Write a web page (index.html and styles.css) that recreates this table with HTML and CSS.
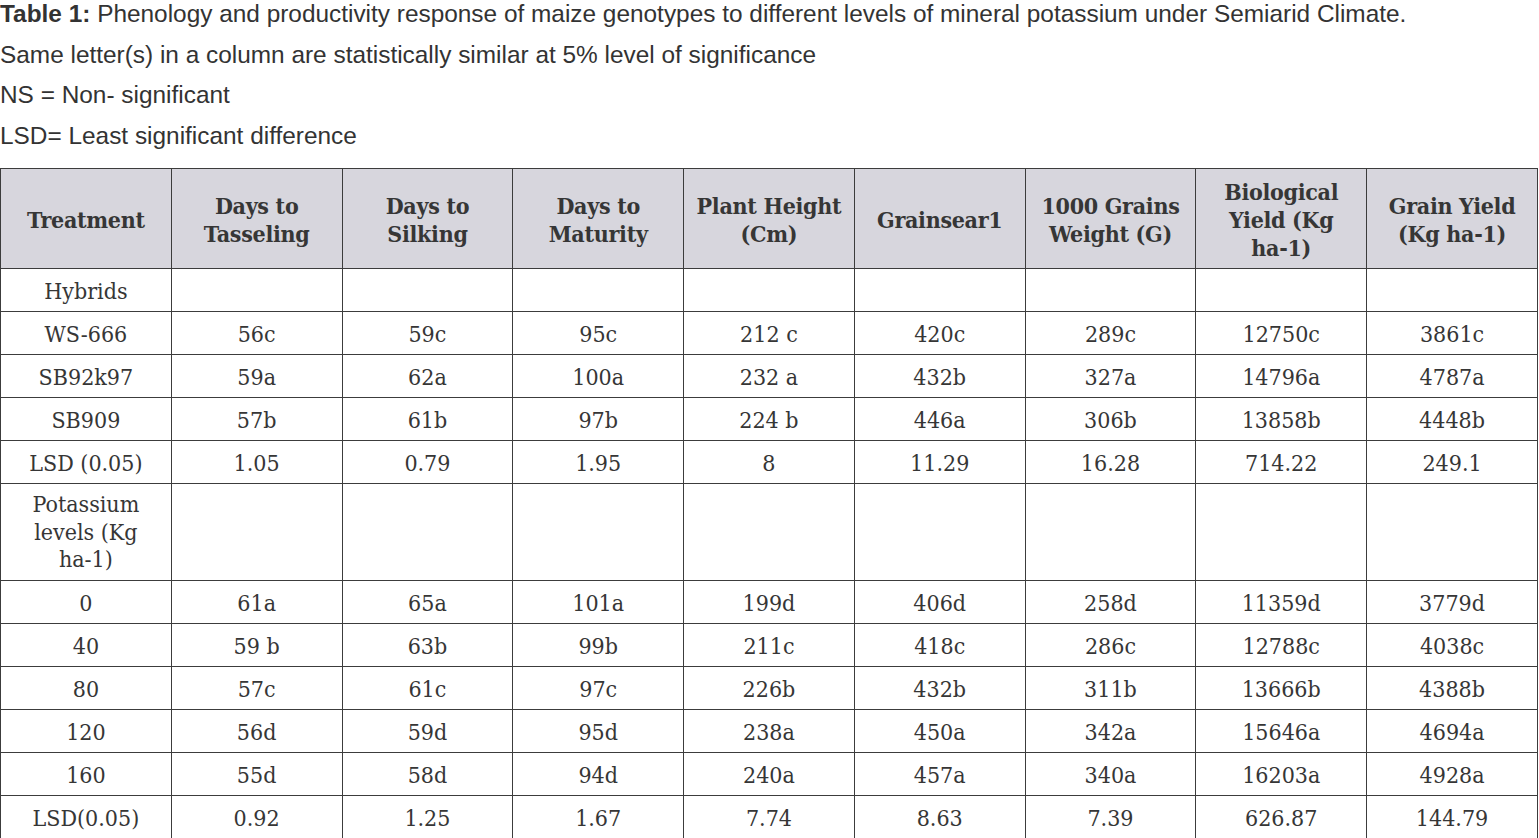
FILE: index.html
```html
<!DOCTYPE html>
<html>
<head>
<meta charset="utf-8">
<link rel="stylesheet" href="styles.css">
</head>
<body>
<div class="notes">
  <p><b>Table 1:</b> Phenology and productivity response of maize genotypes to different levels of mineral potassium under Semiarid Climate.</p>
  <p>Same letter(s) in a column are statistically similar at 5% level of significance</p>
  <p>NS = Non- significant</p>
  <p>LSD= Least significant difference</p>
</div>
<table class="data">
  <thead>
    <tr>
      <th>Treatment</th>
      <th>Days to Tasseling</th>
      <th>Days to Silking</th>
      <th>Days to Maturity</th>
      <th>Plant Height (Cm)</th>
      <th>Grainsear1</th>
      <th>1000 Grains Weight (G)</th>
      <th>Biological Yield (Kg <span class="nw">ha-1)</span></th>
      <th>Grain Yield (Kg <span class="nw">ha-1)</span></th>
    </tr>
  </thead>
  <tbody>
    <tr><td>Hybrids</td><td></td><td></td><td></td><td></td><td></td><td></td><td></td><td></td></tr>
    <tr><td>WS-666</td><td>56c</td><td>59c</td><td>95c</td><td>212 c</td><td>420c</td><td>289c</td><td>12750c</td><td>3861c</td></tr>
    <tr><td>SB92k97</td><td>59a</td><td>62a</td><td>100a</td><td>232 a</td><td>432b</td><td>327a</td><td>14796a</td><td>4787a</td></tr>
    <tr><td>SB909</td><td>57b</td><td>61b</td><td>97b</td><td>224 b</td><td>446a</td><td>306b</td><td>13858b</td><td>4448b</td></tr>
    <tr><td>LSD (0.05)</td><td>1.05</td><td>0.79</td><td>1.95</td><td>8</td><td>11.29</td><td>16.28</td><td>714.22</td><td>249.1</td></tr>
    <tr><td class="multi">Potassium levels (Kg <span class="nw">ha-1)</span></td><td></td><td></td><td></td><td></td><td></td><td></td><td></td><td></td></tr>
    <tr><td>0</td><td>61a</td><td>65a</td><td>101a</td><td>199d</td><td>406d</td><td>258d</td><td>11359d</td><td>3779d</td></tr>
    <tr><td>40</td><td>59 b</td><td>63b</td><td>99b</td><td>211c</td><td>418c</td><td>286c</td><td>12788c</td><td>4038c</td></tr>
    <tr><td>80</td><td>57c</td><td>61c</td><td>97c</td><td>226b</td><td>432b</td><td>311b</td><td>13666b</td><td>4388b</td></tr>
    <tr><td>120</td><td>56d</td><td>59d</td><td>95d</td><td>238a</td><td>450a</td><td>342a</td><td>15646a</td><td>4694a</td></tr>
    <tr><td>160</td><td>55d</td><td>58d</td><td>94d</td><td>240a</td><td>457a</td><td>340a</td><td>16203a</td><td>4928a</td></tr>
    <tr><td>LSD(0.05)</td><td>0.92</td><td>1.25</td><td>1.67</td><td>7.74</td><td>8.63</td><td>7.39</td><td>626.87</td><td>144.79</td></tr>
  </tbody>
</table>
</body>
</html>
```

FILE: styles.css
```css
html, body {
  margin: 0;
  padding: 0;
  background: #ffffff;
}

body {
  color: #333333;
  overflow: hidden;
}

.notes {
  margin-top: -6px;
  font-family: "Liberation Sans", Arial, sans-serif;
  font-size: 24.4px;
  line-height: 40.7px;
  color: #333333;
}

.notes p {
  margin: 0;
  white-space: nowrap;
}

.data {
  margin-top: 11px;
  width: 1538px;
  table-layout: fixed;
  border-collapse: collapse;
  font-family: "DejaVu Serif Condensed", "DejaVu Serif", serif;
  font-size: 23px;
  line-height: 28px;
  color: #363636;
}

.data th,
.data td {
  border: 1px solid #3c3c3c;
  padding: 8px 8px 6px;
  text-align: center;
  vertical-align: middle;
}

.data th {
  background: #d7d6dd;
  font-weight: bold;
  letter-spacing: -0.3px;
  padding-top: 9px;
}

.data td.multi {
  line-height: 27.7px;
  padding-top: 7px;
}

.nw {
  white-space: nowrap;
}
```
